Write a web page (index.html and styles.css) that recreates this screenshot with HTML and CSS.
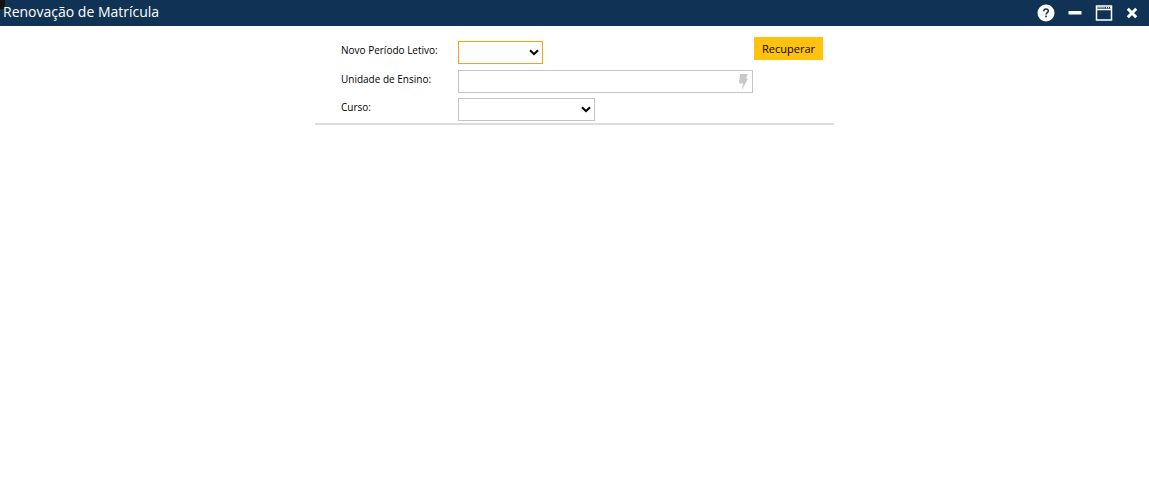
FILE: index.html
```
<!DOCTYPE html>
<html lang="pt-BR">
<head>
<meta charset="UTF-8">
<meta name="viewport" content="width=device-width, initial-scale=1.0">
<title>Renovação de Matrícula</title>
<link rel="stylesheet" href="styles.css">
</head>
<body>
<header class="titlebar">
    <h1>Renovação de Matrícula</h1>
    <div class="window-buttons">
        <button type="button" aria-label="Ajuda">
            <svg width="18" height="18" viewBox="0 0 18 18">
                <circle cx="9" cy="9" r="8.5" fill="#fff"/>
                <path d="M6.700 7.200C6.800 5.700 7.700 5 9 5c1.400 0 2.300.8 2.300 2 0 1.700-2.200 1.700-2.200 3.500" fill="none" stroke="#103355" stroke-width="1.500"/>
                <rect x="8.200" y="11.600" width="1.700" height="1.700" fill="#103355"/>
            </svg>
        </button>
        <button type="button" aria-label="Minimizar">
            <svg width="14" height="18" viewBox="0 0 14 18">
                <rect x="0.500" y="7" width="13" height="3.500" rx="0.500" fill="#fff"/>
            </svg>
        </button>
        <button type="button" aria-label="Maximizar">
            <svg width="18" height="18" viewBox="0 0 18 18">
                <path d="M1.500 2h15v14h-15z" fill="none" stroke="#fff" stroke-width="1.500"/>
                <path d="M1 5.500h16" stroke="#fff" stroke-width="1.500"/>
                <path d="M2 3.500h8" stroke="#fff" stroke-width="1.500" opacity=".5"/>
                <path d="M11 3.500h1M13 3.500h1M15 3.500h1" stroke="#fff" stroke-width="1.500"/>
            </svg>
        </button>
        <button type="button" aria-label="Fechar">
            <svg width="12" height="18" viewBox="0 0 12 18">
                <path d="M1.800 4.800l8.400 8.400M10.200 4.800l-8.400 8.400" stroke="#fff" stroke-width="3"/>
            </svg>
        </button>
    </div>
</header>
<form class="filtro">
    <div class="campos">
        <div class="linha primeira">
            <label for="periodo">Novo Período Letivo:</label>
            <span class="select periodo">
                <select id="periodo" class="ativo"><option></option></select>
                <svg class="seta" width="10" height="7" viewBox="0 0 10 7"><path d="M1 1.200l4 4 4-4" fill="none" stroke="#000" stroke-width="2"/></svg>
            </span>
        </div>
        <div class="linha">
            <label for="unidade">Unidade de Ensino:</label>
            <span class="busca">
                <input type="text" id="unidade">
                <svg class="raio" width="11" height="16" viewBox="0 0 11 16"><path d="M2 0h8L8 4.500h2L4 16l1-6.500H1z" fill="#c8c8c8"/></svg>
            </span>
        </div>
        <div class="linha">
            <label for="curso">Curso:</label>
            <span class="select curso">
                <select id="curso"><option></option></select>
                <svg class="seta" width="10" height="7" viewBox="0 0 10 7"><path d="M1 1.200l4 4 4-4" fill="none" stroke="#000" stroke-width="2"/></svg>
            </span>
        </div>
    </div>
    <button type="button" class="recuperar">Recuperar</button>
</form>
</body>
</html>
```
FILE: styles.css
```
* {
    box-sizing: border-box;
}
body {
    margin: 0;
    background: #fff;
    color: #000;
    font: 10px/18px "Open Sans", "Noto Sans", sans-serif;
}
.titlebar {
    position: relative;
    display: flex;
    align-items: flex-start;
    justify-content: space-between;
    height: 26px;
    padding: 0 11px 0 3px;
    background: #103355;
    color: #fff;
}
/* canto escuro da janela */
.titlebar::before {
    content: "";
    position: absolute;
    top: 0;
    left: 0;
    width: 5px;
    height: 9px;
    background: #111;
}
.titlebar h1 {
    position: relative;
    margin: 0;
    font: 14px/24px "Open Sans", "Noto Sans", sans-serif;
}
.window-buttons {
    display: flex;
    gap: 13px;
    padding-top: 4px;
}
.window-buttons button {
    display: flex;
    padding: 0;
    border: 0;
    background: none;
}
.filtro {
    display: flex;
    align-items: flex-start;
    width: 519px;
    max-width: 100%;
    margin: 11px auto 0;
    padding: 0 11px 2px 26px;
    border-bottom: 2px solid #dcdcdc;
}
.campos {
    flex: 1;
    display: flex;
    flex-direction: column;
    gap: 5px;
    padding-top: 4px;
}
.linha {
    display: flex;
    align-items: flex-start;
}
.primeira {
    padding-bottom: 1px;
}
.linha label {
    width: 117px;
}
.select,
.busca {
    position: relative;
    display: flex;
    height: 23px;
}
.busca {
    flex: 1;
    margin-right: 1px;
}
.periodo {
    width: 85px;
}
.curso {
    width: 137px;
}
select,
input {
    width: 100%;
    height: 100%;
    border: 1px solid #c4c4c4;
    border-radius: 0;
    background: #fff;
    padding: 0 18px 0 4px;
    font: inherit;
    appearance: none;
    outline: none;
}
select.ativo {
    border-color: #e8a817;
}
.seta {
    position: absolute;
    top: 8px;
    right: 4px;
    pointer-events: none;
}
.raio {
    position: absolute;
    top: 4px;
    right: 4px;
}
.recuperar {
    width: 69px;
    height: 23px;
    padding: 1px 0 0;
    border: 0;
    background: #ffc20e;
    color: #000;
    font: 11px/22px "Open Sans", "Noto Sans", sans-serif;
}
```
